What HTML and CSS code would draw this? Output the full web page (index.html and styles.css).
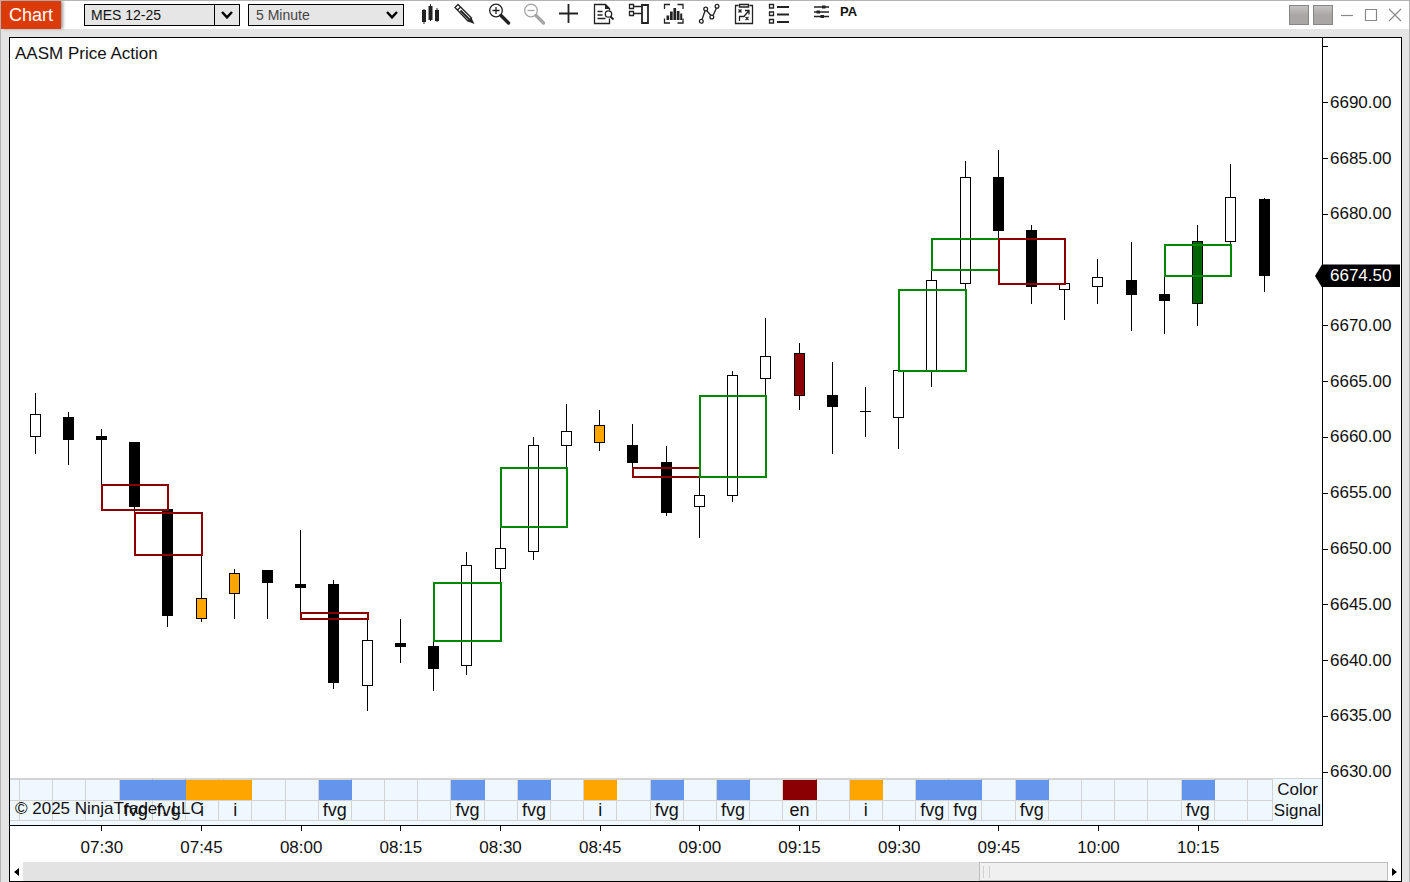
FILE: index.html
```html
<!DOCTYPE html>
<html lang="en">
<head>
<meta charset="utf-8">
<title>Chart - MES 12-25</title>
<link rel="stylesheet" href="styles.css">
</head>
<body>
<div class="window">
  <header class="toolbar">
    <h1 class="tab">Chart</h1>
    <div class="combo">
      <input class="combo-input" type="text" value="MES 12-25" aria-label="Instrument">
      <button class="combo-button" type="button" aria-label="Open instrument list">
        <svg width="12" height="8" viewBox="0 0 12 8"><path d="M1 1l5 5.400 5-5.400" class="chevron"/></svg>
      </button>
    </div>
    <div class="interval">
      <select class="interval-select" aria-label="Interval"><option>5 Minute</option></select>
      <svg class="interval-arrow" width="12" height="8" viewBox="0 0 12 8"><path d="M1 1l5 5.400 5-5.400" class="chevron"/></svg>
    </div>
    <div class="tools">
      <button type="button" class="tool" aria-label="Bar type">
        <svg viewBox="0 0 23 24"><path class="solid" d="M4 7h4v12H4zM10.500 3h4v14h-4zM17 7h4v11h-4zM5.500 6h1v15h-1zM12 1h1v17h-1zM18.500 5h1v14h-1z"/></svg>
      </button>
      <button type="button" class="tool" aria-label="Drawing tools">
        <svg viewBox="0 0 23 24"><path class="line" d="M2 4.500L5 1.500l13.500 13.500L15 18zM4.500 7L7.500 4"/><path class="line bold" d="M7.500 7.500l9 9"/><path class="solid" d="M15 18.500l3.500-3.500 3 6z"/></svg>
      </button>
      <button type="button" class="tool" aria-label="Zoom in">
        <svg viewBox="0 0 23 24"><circle class="line" cx="8" cy="7.500" r="6.300"/><path class="line" d="M4.500 7.500h7M8 4v7"/><path class="line thick" d="M13 12.500l7.500 7.500"/></svg>
      </button>
      <button type="button" class="tool" aria-label="Zoom out" disabled>
        <svg viewBox="0 0 23 24"><circle class="line" cx="8" cy="7.500" r="6.300"/><path class="line" d="M4.500 7.500h7"/><path class="line thick" d="M13 12.500l7.500 7.500"/></svg>
      </button>
      <button type="button" class="tool" aria-label="Crosshair">
        <svg viewBox="0 0 23 24"><path class="line bold" d="M1 10.500h19M10.500 1v19"/></svg>
      </button>
      <button type="button" class="tool" aria-label="Data box">
        <svg viewBox="0 0 23 24"><path class="line" d="M16.500 15.500v5h-15v-19h11l4 4v2"/><path class="solid" d="M12 1l5 5h-5z"/><path class="line" d="M4.500 8.500h5M4.500 12h5M4.500 15.500h8"/><circle class="shade" cx="15.500" cy="11" r="3.200"/><path class="line bold" d="M17.500 13.500l3 3"/></svg>
      </button>
      <button type="button" class="tool" aria-label="Chart trader">
        <svg viewBox="0 0 23 24"><path class="line" d="M1.500 1.500h4v4h-4zM1.500 8.500h4v4h-4zM5.500 3.500H14M5.500 10.500H14"/><path class="line bold" d="M14 2h6v18h-6z"/></svg>
      </button>
      <button type="button" class="tool" aria-label="Indicators">
        <svg viewBox="0 0 23 24"><path class="line" d="M1.500 6V1.500H7M14.500 1.500H20V6M1.500 15.500V20H7M14.500 20H20v-4.500"/><path class="solid" d="M3.500 12.500h2.700V17H3.500zM7 8.500h2.700V17H7zM10.400 5h2.700v12h-2.700zM13.800 8h2.700v9h-2.700zM17.200 10.500h2V17h-2z"/></svg>
      </button>
      <button type="button" class="tool" aria-label="Strategies">
        <svg viewBox="0 0 23 24"><path class="line" d="M4 16.500l3-8.500M9 8l4 4.500M15 12.500l3.500-7.500"/><circle class="line" cx="3.300" cy="18.300" r="1.900"/><circle class="line" cx="7.700" cy="6" r="1.900"/><circle class="line" cx="13.800" cy="14" r="1.900"/><circle class="line" cx="19" cy="3.300" r="1.900"/></svg>
      </button>
      <button type="button" class="tool" aria-label="Strategy performance">
        <svg viewBox="0 0 23 24"><path class="line" d="M5.500 2.500h-3v18h17v-18h-3M6.500 1.500h9V4h-9z"/><path class="line" d="M5.500 6.500l3 3M8.500 6.500l-3 3M12.500 14l3 3M15.500 14l-3 3M6.500 18v-4.500h4.500L15.500 8M12 7.500h4v4"/></svg>
      </button>
      <button type="button" class="tool" aria-label="Properties">
        <svg viewBox="0 0 23 24"><path class="line" d="M1.500 1.500h4v3.500h-4zM1.500 9h4v3.500h-4zM1.500 16.500h4V20h-4z"/><path class="line bold" d="M9 4h12M9 11.500h12M9 19h12"/></svg>
      </button>
    </div>
    <div class="tools extra">
      <button type="button" class="tool" aria-label="Indicator settings">
        <svg viewBox="0 0 23 24"><path class="line" d="M4 4h15M4 9h15M4 13.500h15"/><path class="solid" d="M12 2.500h3.500v3H12zM6.500 7.500H10v3H6.500zM10.500 12H14v3h-3.500z"/></svg>
      </button>
      <button type="button" class="text-tool">PA</button>
    </div>
    <div class="window-controls">
      <button type="button" class="swatch" aria-label="Instrument link"></button>
      <button type="button" class="swatch" aria-label="Interval link"></button>
      <button type="button" class="control" aria-label="Minimize"><svg viewBox="0 0 14 14"><path d="M1 7.500h12"/></svg></button>
      <button type="button" class="control" aria-label="Maximize"><svg viewBox="0 0 14 14"><path d="M1.500 1.500h11v11h-11z"/></svg></button>
      <button type="button" class="control" aria-label="Close"><svg viewBox="0 0 14 14"><path d="M1 1l12 12M13 1L1 13"/></svg></button>
    </div>
  </header>

  <main class="panel">
    <section class="plot">
      <h2 class="plot-title">AASM Price Action</h2>
      <svg class="candles" id="candles" viewBox="10 38 1312 740" preserveAspectRatio="none" role="img" aria-label="Candlestick chart"></svg>
      <table class="strip">
        <colgroup id="columns"></colgroup>
        <tbody>
          <tr id="color-row"></tr>
          <tr id="signal-row"></tr>
        </tbody>
      </table>
      <p class="copyright">© 2025 NinjaTrader, LLC</p>
    </section>
    <aside class="price-axis">
      <span class="axis-start"></span>
      <span class="price">6690.00</span>
      <span class="price">6685.00</span>
      <span class="price">6680.00</span>
      <span class="price"></span>
      <span class="price">6670.00</span>
      <span class="price">6665.00</span>
      <span class="price">6660.00</span>
      <span class="price">6655.00</span>
      <span class="price">6650.00</span>
      <span class="price">6645.00</span>
      <span class="price">6640.00</span>
      <span class="price">6635.00</span>
      <span class="price">6630.00</span>
      <span class="last-price">6674.50</span>
    </aside>
    <div class="time-axis">
      <span>07:30</span><span>07:45</span><span>08:00</span><span>08:15</span><span>08:30</span><span>08:45</span><span>09:00</span><span>09:15</span><span>09:30</span><span>09:45</span><span>10:00</span><span>10:15</span>
    </div>
    <div class="scrollbar">
      <button type="button" class="scroll-button" aria-label="Scroll left"><svg width="5" height="8" viewBox="0 0 5 8"><path d="M5 0v8L0 4z"/></svg></button>
      <div class="scroll-track"><div class="scroll-thumb"></div></div>
      <button type="button" class="scroll-button" aria-label="Scroll right"><svg width="5" height="8" viewBox="0 0 5 8"><path d="M0 0v8l5-4z"/></svg></button>
    </div>
  </main>
</div>
<script src="chart.js"></script>
</body>
</html>
```

FILE: styles.css
```css
* { box-sizing: border-box; }

body {
  margin: 0;
  font-family: "Liberation Sans", Arial, sans-serif;
  color: #111;
  background: #e4e4e5;
}

button { padding: 0; border: 0; background: none; font: inherit; color: inherit; }

.window {
  display: flex;
  flex-direction: column;
  min-height: 100vh;
  border: 1px solid #b4b4b4;
  border-bottom: 0;
}

/* Toolbar */
.toolbar {
  display: flex;
  align-items: center;
  height: 28px;
  background: #fff;
}

.tab {
  align-self: stretch;
  width: 60px;
  margin: 0 23px 0 0;
  background: #dc3a06;
  color: #fff;
  font-size: 18px;
  font-weight: 400;
  line-height: 28px;
  text-align: center;
  box-shadow: 2px 0 3px #999;
}

.combo {
  display: flex;
  width: 156px;
  height: 22px;
  border: 1px solid #000;
  background: #e6e6e6;
}

.combo-input {
  flex: 1;
  min-width: 0;
  padding: 0 6px;
  border: 0;
  background: none;
  font: 14px "Liberation Sans", Arial, sans-serif;
  color: #111;
}

.combo-button {
  display: grid;
  place-items: center;
  width: 25px;
  border-left: 1px solid #000;
}

.chevron { fill: none; stroke: #000; stroke-width: 2.4; }

.interval {
  display: grid;
  align-items: center;
  width: 156px;
  height: 22px;
  margin-left: 8px;
}

.interval-select, .interval-arrow { grid-area: 1 / 1; }

.interval-select {
  appearance: none;
  width: 100%;
  height: 22px;
  padding: 0 7px;
  border: 1px solid #000;
  border-radius: 0;
  background: #e6e6e6;
  color: #444;
  font: 14px "Liberation Sans", Arial, sans-serif;
}

.interval-arrow { justify-self: end; margin-right: 6px; pointer-events: none; }

.tools { display: flex; margin-left: 8px; }
.extra { margin-left: 7px; align-items: center; }

.tool { display: grid; place-items: center; width: 35px; height: 24px; }
.tool svg { width: 23px; height: 24px; }
.tool:disabled { opacity: 0.4; }
.solid { fill: #222; }
.line { fill: none; stroke: #222; stroke-width: 1.3; }
.line.bold { stroke-width: 1.8; }
.line.thick { stroke-width: 3.4; stroke-linecap: round; }
.shade { fill: #fff; stroke: #222; stroke-width: 1.3; }

.text-tool { height: 24px; padding: 0 0 7px 1px; font-size: 13px; font-weight: 700; line-height: 16px; }

.window-controls { display: flex; align-items: center; margin-left: auto; padding-right: 7px; }

.swatch {
  width: 20px;
  height: 20px;
  margin-right: 4px;
  border: 1px solid #858585;
  background: linear-gradient(#c6c3c3, #aaa6a6 50%);
}

.control { display: grid; place-items: center; width: 14px; height: 20px; margin-right: 10px; }
.swatch + .control { margin-left: 3px; }
.control:last-child { margin-right: 0; }
.control svg { width: 14px; height: 14px; fill: none; stroke: #888; stroke-width: 1.2; }

/* Chart panel */
.panel {
  flex: 1;
  display: grid;
  grid-template-columns: minmax(0, 1fr) 78px;
  grid-template-rows: minmax(400px, 1fr) 36px 19px;
  margin: 8px 7px 0 8px;
  border: 1px solid #000;
  background: #fff;
}

.plot {
  position: relative;
  display: flex;
  flex-direction: column;
  border-right: 1px solid #000;
  border-bottom: 1px solid #000;
}

.plot-title, .copyright {
  position: absolute;
  left: 5px;
  margin: 0;
  font-size: 17px;
  font-weight: 400;
  line-height: 20px;
}
.plot-title { top: 6px; }
.copyright { bottom: 6px; }

.candles { flex: 1 1 0; width: 100%; height: 0; min-height: 0; shape-rendering: crispEdges; }

.white { fill: #fff; stroke: #000; }
.black { fill: #000; stroke: #000; }
.orange { fill: #ffa500; stroke: #000; }
.red { fill: #8b0000; stroke: #000; }
.green { fill: #006400; stroke: #000; }
.gap { fill: none; stroke-width: 2; }
.gap-up { stroke: #008800; }
.gap-down { stroke: #8b0000; }

/* Indicator strip */
.strip {
  table-layout: fixed;
  width: 100%;
  border-top: 1px solid #d3d3d3;
  border-bottom: 4px solid #f0f8ff;
  border-spacing: 0;
  background: #f0f8ff;
  font-size: 18px;
}

.strip td, .strip th {
  height: 21px;
  padding: 0;
  font-weight: 400;
  line-height: 19px;
  text-align: center;
  white-space: nowrap;
}
.strip th { font-size: 17px; }

.strip td { border-right: 1px solid #d3d3d3; border-top: 1px solid #d3d3d3; }
.strip #signal-row td { border-bottom: 1px solid #d3d3d3; }
.strip td.fill-blue { background: #6495ed; border-right-color: #6495ed; }
.strip td.fill-orange { background: #ffa500; border-right-color: #ffa500; }
.strip td.fill-red { background: #8b0000; border-right-color: #8b0000; }

.edge { width: 10px; }
.last { width: 25px; }
.names { width: 49px; }

/* Axes */
.price-axis {
  position: relative;
  display: flex;
  flex-direction: column;
  padding-bottom: 26px;
  font-size: 17px;
}

.axis-start { height: 37px; padding-top: 8px; }
.axis-start::before { content: ""; display: block; width: 5px; height: 1px; background: #000; }

.price { flex: 1; display: flex; align-items: center; line-height: 20px; }
.price::before { content: ""; width: 5px; height: 1px; margin-right: 2px; background: #000; }

.last-price {
  position: absolute;
  top: 30%;
  left: -8px;
  right: 1px;
  height: 23px;
  margin-top: -10px;
  padding-left: 15px;
  background: #000;
  color: #fff;
  line-height: 24px;
  clip-path: polygon(7px 0, 100% 0, 100% 100%, 7px 100%, 0 50%);
}

.time-axis { display: flex; grid-column: 1; padding: 0 75px 0 42px; font-size: 17px; }
.time-axis span { flex: 1; text-align: center; line-height: 20px; }
.time-axis span::before { content: ""; display: block; width: 1px; height: 5px; margin: 0 auto 7px; background: #000; }

.scrollbar { grid-column: 1 / -1; display: flex; background: #e3e3e3; }
.scroll-button { display: grid; place-items: center; width: 13px; background: #fff; }
.scroll-track { flex: 1; display: flex; justify-content: flex-end; }
.scroll-thumb { width: 30%; padding: 3px; border: 1px solid #bdbdbd; background: #f0f0f0; }
.scroll-thumb::before { content: ""; display: block; width: 5px; height: 12px; border: solid #d0d0d0; border-width: 0 1px; }
```

FILE: chart.js
```js
// x, high, body top, body bottom, low, fill
const candles = [
  [35, 393, 414, 437, 454, "white"],
  [68, 412, 417, 440, 465, "black"],
  [101, 429, 436, 440, 485, "black"],
  [134, 442, 442, 507, 513, "black"],
  [167, 509, 509, 616, 627, "black"],
  [201, 555, 598, 619, 622, "orange"],
  [234, 569, 573, 594, 619, "orange"],
  [267, 570, 570, 583, 619, "black"],
  [300, 530, 584, 588, 613, "black"],
  [333, 580, 584, 683, 689, "black"],
  [367, 619, 640, 686, 711, "white"],
  [400, 619, 643, 647, 663, "black"],
  [433, 641, 646, 669, 691, "black"],
  [466, 552, 565, 666, 675, "white"],
  [500, 527, 548, 569, 583, "white"],
  [533, 437, 445, 552, 560, "white"],
  [566, 404, 431, 446, 468, "white"],
  [599, 410, 425, 443, 451, "orange"],
  [632, 424, 445, 463, 468, "black"],
  [666, 446, 462, 513, 516, "black"],
  [699, 477, 495, 507, 538, "white"],
  [732, 371, 375, 496, 502, "white"],
  [765, 318, 356, 379, 396, "white"],
  [799, 343, 353, 396, 410, "red"],
  [832, 362, 395, 407, 454, "black"],
  [865, 387, 411, 412, 437, "black"],
  [898, 370, 370, 418, 449, "white"],
  [931, 270, 280, 372, 387, "white"],
  [965, 161, 177, 284, 290, "white"],
  [998, 150, 177, 231, 239, "black"],
  [1031, 225, 230, 287, 304, "black"],
  [1064, 283, 283, 290, 320, "white"],
  [1097, 259, 277, 287, 304, "white"],
  [1131, 242, 280, 295, 331, "black"],
  [1164, 276, 294, 301, 334, "black"],
  [1197, 225, 241, 304, 326, "green"],
  [1230, 164, 197, 242, 245, "white"],
  [1264, 198, 199, 276, 292, "black"]
];

// left, top, right, bottom, direction
const gaps = [
  [101, 484, 169, 511, "down"],
  [134, 512, 203, 556, "down"],
  [300, 612, 369, 620, "down"],
  [433, 582, 502, 642, "up"],
  [500, 467, 568, 528, "up"],
  [632, 467, 701, 478, "down"],
  [699, 395, 767, 478, "up"],
  [898, 289, 967, 372, "up"],
  [931, 238, 1000, 271, "up"],
  [998, 238, 1066, 285, "down"],
  [1164, 244, 1232, 277, "up"]
];

const signals = {
  3: ["blue", "fvg"], 4: ["blue", "fvg"], 5: ["orange", "i"], 6: ["orange", "i"],
  9: ["blue", "fvg"], 13: ["blue", "fvg"], 15: ["blue", "fvg"], 17: ["orange", "i"],
  19: ["blue", "fvg"], 21: ["blue", "fvg"], 23: ["red", "en"], 25: ["orange", "i"],
  27: ["blue", "fvg"], 28: ["blue", "fvg"], 30: ["blue", "fvg"], 35: ["blue", "fvg"]
};

let shapes = "";
for (const [x, high, top, bottom, low, fill] of candles) {
  shapes += `<rect x="${x}" y="${high}" width="1" height="${low - high}"/>`;
  shapes += bottom - top > 1
    ? `<rect class="${fill}" x="${x - 4.5}" y="${top + 0.5}" width="10" height="${bottom - top - 1}"/>`
    : `<rect x="${x - 5}" y="${top}" width="11" height="1"/>`;
}
for (const [left, top, right, bottom, direction] of gaps) {
  shapes += `<rect class="gap gap-${direction}" x="${left + 1}" y="${top + 1}" width="${right - left - 2}" height="${bottom - top - 2}"/>`;
}
document.getElementById("candles").innerHTML = shapes;

let columns = '<col class="edge">';
let colorCells = "<td></td>";
let signalCells = "<td></td>";
candles.forEach((candle, index) => {
  const [color, text] = signals[index] || ["", ""];
  columns += index === candles.length - 1 ? '<col class="last">' : "<col>";
  colorCells += color ? `<td class="fill-${color}"></td>` : "<td></td>";
  signalCells += `<td>${text}</td>`;
});
document.getElementById("columns").innerHTML = columns + '<col class="names">';
document.getElementById("color-row").innerHTML = colorCells + '<th scope="row">Color</th>';
document.getElementById("signal-row").innerHTML = signalCells + '<th scope="row">Signal</th>';
```
